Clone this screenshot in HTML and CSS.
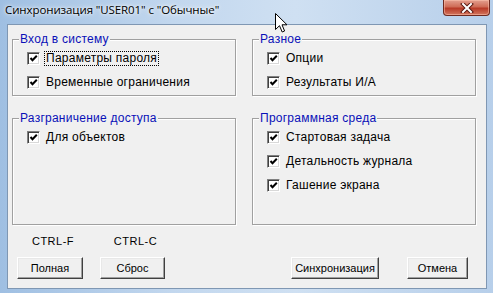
FILE: index.html
```html
<!DOCTYPE html>
<html lang="ru">
<head>
    <meta charset="UTF-8">
    <title>Синхронизация</title>
    <link rel="stylesheet" href="styles.css">
</head>
<body>
    <div class="window">
        <div class="titlebar">
            <span class="title">Синхронизация "USER01" с "Обычные"</span>
            <button class="close">
                <svg width="14" height="10" viewBox="0 0 14 10">
                    <path d="M3 1 L11 9 M11 1 L3 9" stroke="#5a1a12" stroke-width="4" stroke-linecap="square"/>
                    <path d="M3 1 L11 9 M11 1 L3 9" stroke="#fff" stroke-width="2" stroke-linecap="square"/>
                </svg>
            </button>
        </div>
        <div class="client">
            <div class="groups">
                <div class="group">
                    <span class="group-title">Вход в систему</span>
                    <label class="check"><span class="box"></span><span class="text focused">Параметры пароля</span></label>
                    <label class="check"><span class="box"></span><span class="text">Временные ограничения</span></label>
                </div>
                <div class="group">
                    <span class="group-title">Разное</span>
                    <label class="check"><span class="box"></span><span class="text">Опции</span></label>
                    <label class="check"><span class="box"></span><span class="text">Результаты И/А</span></label>
                </div>
                <div class="group">
                    <span class="group-title">Разграничение доступа</span>
                    <label class="check"><span class="box"></span><span class="text">Для объектов</span></label>
                </div>
                <div class="group">
                    <span class="group-title">Программная среда</span>
                    <label class="check"><span class="box"></span><span class="text">Стартовая задача</span></label>
                    <label class="check"><span class="box"></span><span class="text">Детальность журнала</span></label>
                    <label class="check"><span class="box"></span><span class="text">Гашение экрана</span></label>
                </div>
            </div>
            <div class="actions">
                <div class="shortcuts">
                    <div class="shortcut">
                        <span class="hotkey">CTRL-F</span>
                        <button class="btn btn-full">Полная</button>
                    </div>
                    <div class="shortcut">
                        <span class="hotkey">CTRL-C</span>
                        <button class="btn btn-reset">Сброс</button>
                    </div>
                </div>
                <div class="main-buttons">
                    <button class="btn btn-sync">Синхронизация</button>
                    <button class="btn btn-cancel">Отмена</button>
                </div>
            </div>
        </div>
        <svg class="cursor" width="13" height="21" viewBox="0 0 13 21">
            <path d="M0.5 0.5 L0.5 16.5 L4.5 12.7 L7.2 19 L9.6 18 L7 11.8 L12 11.8 Z" fill="#fff" stroke="#000" stroke-width="1"/>
        </svg>
    </div>
</body>
</html>
```

FILE: styles.css
```css
body {
    margin: 0;
    font-family: "Liberation Sans", Arial, sans-serif;
    font-size: 12px;
    letter-spacing: 0.25px;
    color: #000;
}
.window {
    position: relative;
    width: 493px;
    height: 293px;
    display: flex;
    flex-direction: column;
    background: linear-gradient(to right, #9fbfe2, #c2d7ee 35%, #cfe0f2 60%, #b7cfea);
    overflow: hidden;
}
.titlebar {
    height: 24px;
    display: flex;
    justify-content: space-between;
    align-items: flex-start;
    padding-left: 5px;
}
.title {
    font-family: "Open Sans", "Noto Sans", sans-serif;
    font-size: 11.5px;
    line-height: 20px;
    letter-spacing: -0.1px;
    text-shadow: 0 0 6px #fff, 0 0 3px #fff;
}
.close {
    width: 47px;
    height: 16px;
    margin-right: 3px;
    padding: 0;
    border: 1px solid #6e2a20;
    border-top: none;
    border-radius: 0 0 4px 4px;
    background: linear-gradient(#e3a08f, #cf6c57 45%, #b83a27 55%, #d2765e);
    box-shadow: inset 0 0 0 1px rgba(255, 200, 180, 0.5);
    display: flex;
    align-items: center;
    justify-content: center;
}
.client {
    flex: 1;
    margin: 0 6px 4px 7px;
    border: 1px solid #7f97b3;
    background: #f0f0f0;
    padding: 14px 10px 0 4px;
    display: flex;
    flex-direction: column;
}
.groups {
    display: grid;
    grid-template-columns: 224px 224px;
    grid-template-rows: 57px 107px;
    column-gap: 16px;
    row-gap: 22px;
}
.group {
    border: 1px solid #a0a0a0;
    box-shadow: 1px 1px 0 #fff, inset 1px 1px 0 #fff;
    display: flex;
    flex-direction: column;
    align-items: flex-start;
}
.group-title {
    margin: -8px 0 0 6px;
    padding: 0 1px 0 1px;
    line-height: 14px;
    background: #f0f0f0;
    color: #0a10b8;
}
.check {
    height: 24px;
    display: flex;
    align-items: center;
    padding-left: 14px;
}
.box {
    width: 11px;
    height: 11px;
    border: 1px solid;
    border-color: #808080 #fff #fff #808080;
    box-shadow: inset 1px 1px 0 #404040, inset -1px -1px 0 #d8d8d8;
    background: #fff url("data:image/svg+xml,%3Csvg xmlns='http://www.w3.org/2000/svg' width='11' height='11'%3E%3Cpath d='M2.5 5 L4.5 7.2 L8.8 2.8' fill='none' stroke='%23000' stroke-width='2'/%3E%3C/svg%3E") no-repeat center;
    margin-right: 4px;
}
.text {
    padding: 0 1px;
    line-height: 13px;
    border: 1px solid transparent;
}
.focused {
    border: 1px dotted #000;
}
.actions {
    display: flex;
    justify-content: space-between;
    margin-top: 9px;
}
.shortcuts {
    display: flex;
    gap: 17px;
    margin-left: 5px;
}
.shortcut {
    display: flex;
    flex-direction: column;
    align-items: center;
    gap: 9px;
}
.hotkey {
    font-size: 11px;
    letter-spacing: 0.5px;
    line-height: 14px;
    padding-left: 6px;
}
.main-buttons {
    display: flex;
    align-items: flex-end;
    gap: 28px;
    margin-right: 8px;
}
.btn {
    height: 22px;
    padding: 0;
    border: 1px solid;
    border-color: #fff #404040 #404040 #fff;
    box-shadow: inset -1px -1px 0 #a0a0a0, inset 1px 1px 0 #e8e8e8;
    background: #f0f0f0;
    font-family: "Liberation Sans", Arial, sans-serif;
    font-size: 11px;
    letter-spacing: 0;
    color: #000;
}
.btn-full {
    width: 66px;
}
.btn-reset {
    width: 65px;
}
.btn-sync {
    width: 88px;
}
.btn-cancel {
    width: 61px;
}
.cursor {
    position: absolute;
    left: 275px;
    top: 13px;
}
```
